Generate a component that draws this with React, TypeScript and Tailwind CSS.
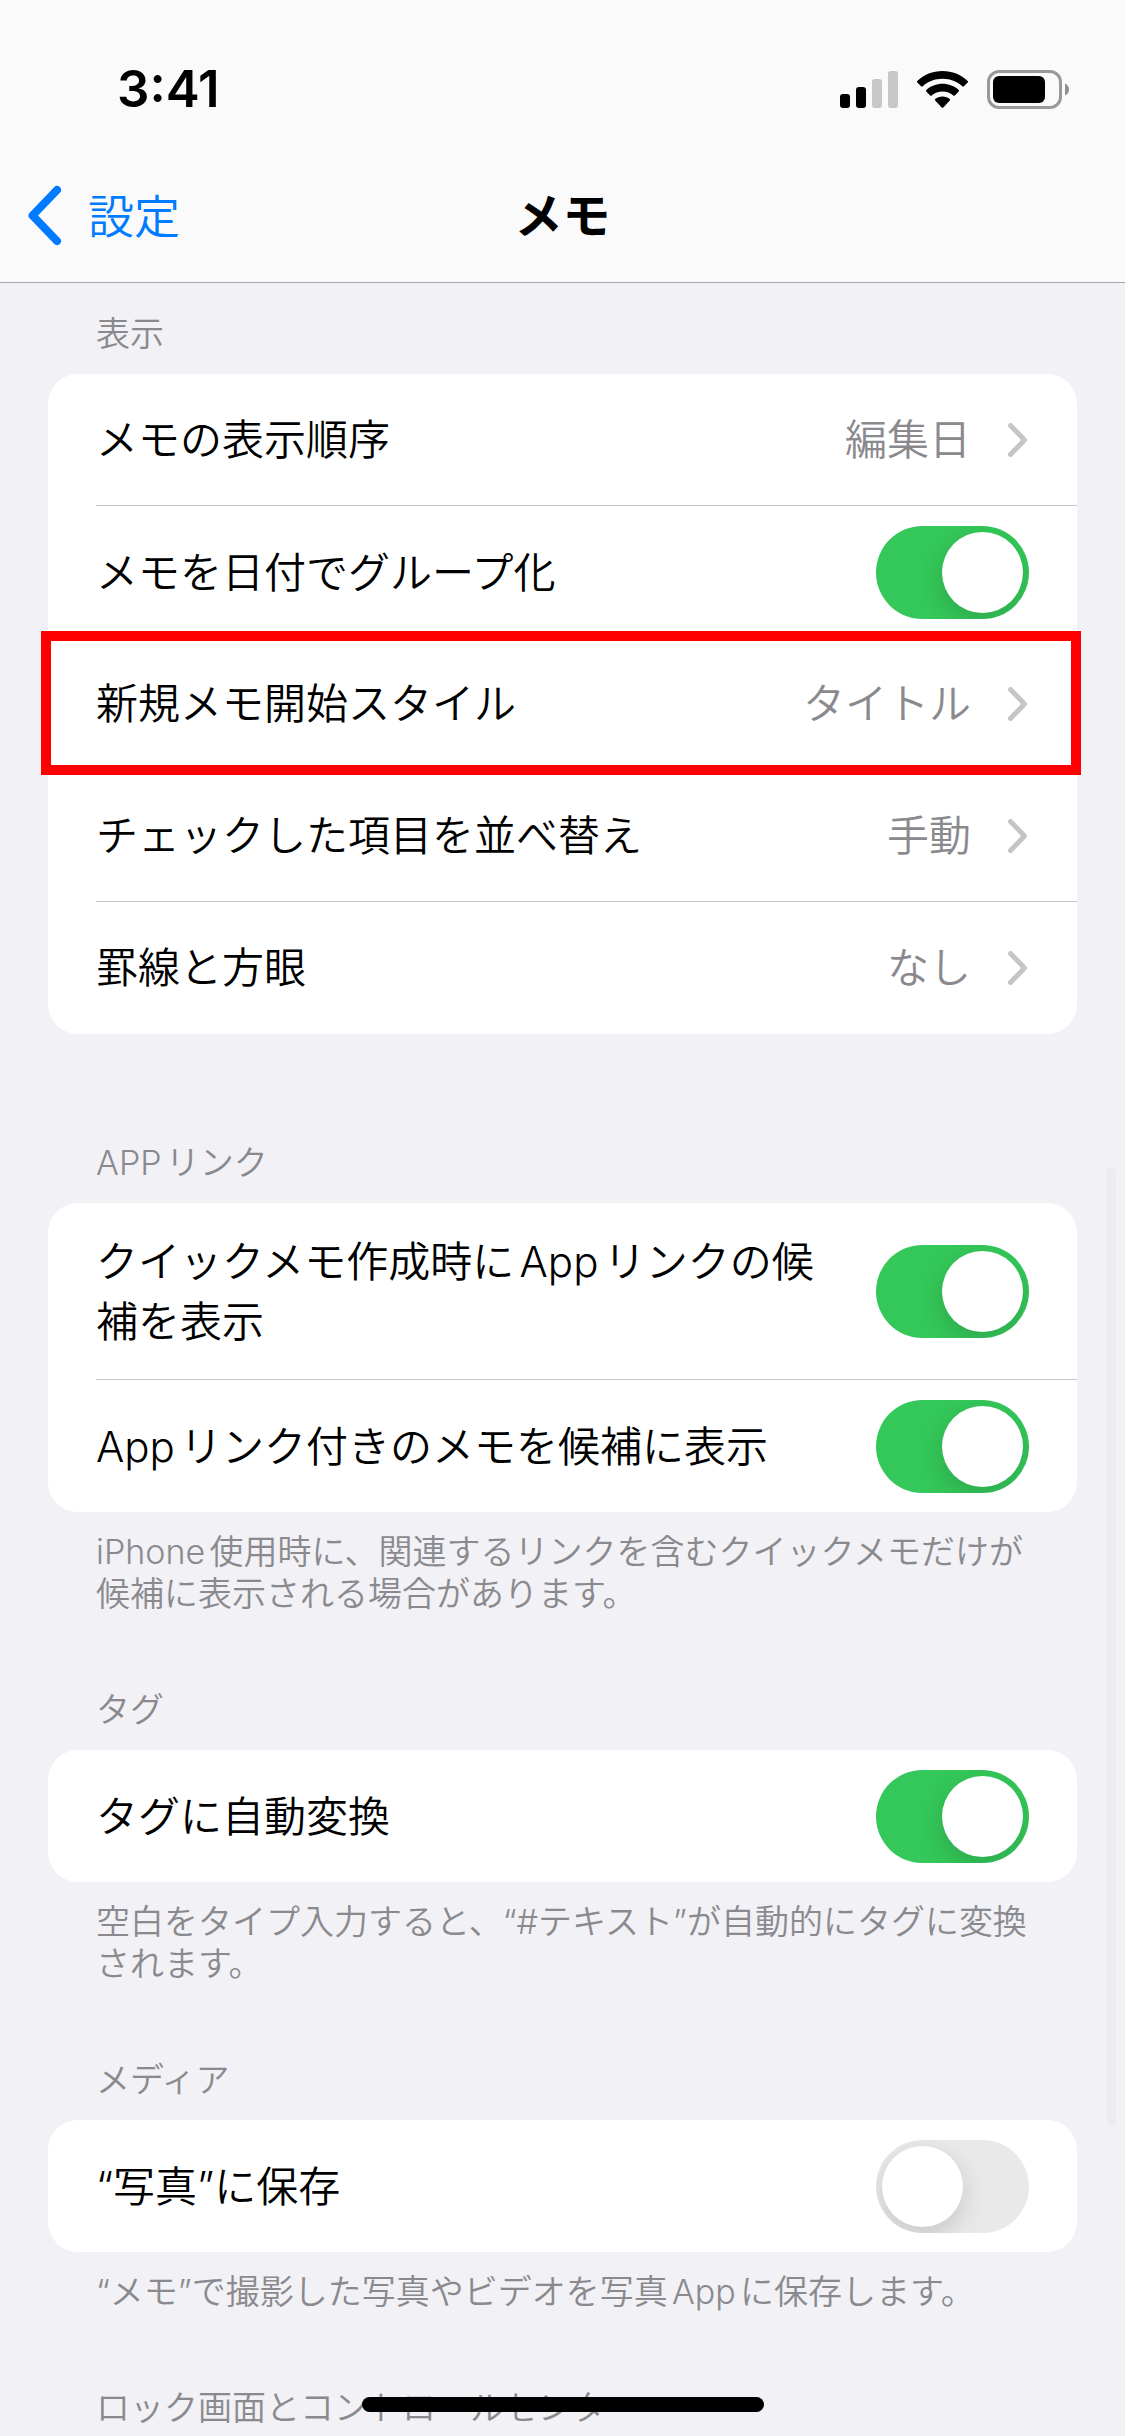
import { useState } from "react";
import type { ReactNode } from "react";

interface SectionProps {
    title: string;
    note?: string;
    className?: string;
    children?: ReactNode;
}

interface LinkRowProps {
    label: string;
    value: string;
    highlighted?: boolean;
}

interface ToggleRowProps {
    label: string;
    defaultOn?: boolean;
}

const SignalIcon = () => {
    return (
        <svg width="58" height="37" viewBox="0 0 58 37" aria-hidden="true">
            <rect x="0" y="23" width="10" height="14" rx="3" fill="#000" />
            <rect x="16" y="16" width="10" height="21" rx="3" fill="#000" />
            <rect x="32" y="8" width="10" height="29" rx="3" fill="#c7c7c7" />
            <rect x="48" y="0" width="10" height="37" rx="3" fill="#c7c7c7" />
        </svg>
    );
};

const WifiIcon = () => {
    return (
        <svg width="51" height="37" viewBox="0 0 51 37" aria-hidden="true">
            <path d="M25.5 0C35.2 0 44.1 3.7 50.7 9.9C51.2 10.4 51.2 11 50.7 11.5L46.9 15.3C46.4 15.8 45.8 15.8 45.3 15.3C40 10.4 33.1 7.7 25.5 7.7C17.9 7.7 11 10.4 5.7 15.3C5.2 15.8 4.6 15.8 4.1 15.3L.3 11.5C-.2 11-.2 10.4.3 9.9C6.9 3.7 15.8 0 25.5 0Z" />
            <path d="M25.5 12.8C31.7 12.8 37.4 15.1 41.7 19C42.2 19.5 42.2 20.1 41.7 20.6L37.9 24.4C37.4 24.9 36.8 24.8 36.3 24.4C33.4 21.9 29.6 20.4 25.5 20.4C21.4 20.4 17.6 21.9 14.7 24.4C14.2 24.8 13.6 24.9 13.1 24.4L9.3 20.6C8.8 20.1 8.8 19.5 9.3 19C13.6 15.1 19.3 12.8 25.5 12.8Z" />
            <path d="M25.5 25.5C28.4 25.5 30.8 26.4 32.8 28C33.3 28.5 33.3 29.1 32.8 29.6L26.3 36.4C25.8 36.9 25.2 36.9 24.7 36.4L18.2 29.6C17.7 29.1 17.7 28.5 18.2 28C20.2 26.4 22.6 25.5 25.5 25.5Z" />
        </svg>
    );
};

const BatteryIcon = () => {
    return (
        <svg width="82" height="39" viewBox="0 0 82 39" aria-hidden="true">
            <rect x="1.5" y="1.5" width="72" height="36" rx="10.5" fill="none" stroke="#999" strokeWidth="3" />
            <rect x="6" y="6" width="52" height="27" rx="6" fill="#000" />
            <path d="M78 13.5C80.4 14.5 82 16.8 82 19.5C82 22.2 80.4 24.5 78 25.5Z" fill="#8e8e8e" />
        </svg>
    );
};

const BackIcon = () => {
    return (
        <svg width="34" height="62" viewBox="0 0 34 62" fill="none" aria-hidden="true">
            <path d="M29 5L4.5 30.5L29 56" stroke="#007aff" strokeWidth="8" strokeLinecap="round" strokeLinejoin="round" />
        </svg>
    );
};

const ChevronIcon = () => {
    return (
        <svg width="22" height="36" viewBox="0 0 22 36" fill="none" className="shrink-0" aria-hidden="true">
            <path d="M3.5 3.5L17.5 18L3.5 32.5" stroke="#c5c5c7" strokeWidth="5" strokeLinecap="round" strokeLinejoin="round" />
        </svg>
    );
};

const StatusBar = () => {
    return (
        <div className="flex items-center justify-between pt-[59px] pr-14 pl-[117px]">
            <span className="text-[51px] leading-[60px] font-semibold">3:41</span>
            <div className="flex items-center gap-[19px]">
                <SignalIcon />
                <WifiIcon />
                <BatteryIcon />
            </div>
        </div>
    );
};

const NavBar = () => {
    return (
        <nav className="grid grid-cols-3 items-center pt-[67px] pb-[36px] pl-7 leading-[60px]">
            <button type="button" className="flex h-[60px] items-center gap-[26px] justify-self-start text-[46px] font-[350] text-[#007aff]">
                <BackIcon />
                設定
            </button>
            <h1 className="-ml-7 text-center text-[48px] font-bold">メモ</h1>
        </nav>
    );
};

const rowLine = "border-b border-[#c6c6c8] group-last:border-b-0";

const LinkRow = ({ label, value, highlighted }: LinkRowProps) => {
    return (
        <li className="group relative pl-12">
            <button type="button" className={`flex min-h-[132px] w-full items-center pr-12 text-left ${rowLine}`}>
                <span className="grow">{label}</span>
                <span className="mr-9 text-[#8a8a8e]">{value}</span>
                <ChevronIcon />
            </button>
            {highlighted && (
                <div className="pointer-events-none absolute -top-[7px] -right-1 -bottom-[5px] -left-[7px] z-10 border-10 border-[#ff0000]" />
            )}
        </li>
    );
};

const ToggleRow = ({ label, defaultOn = false }: ToggleRowProps) => {
    const [on, setOn] = useState(defaultOn);

    return (
        <li className="group pl-12">
            <label className={`flex min-h-[132px] items-center justify-between gap-12 pt-[19px] pb-[18px] pr-12 ${rowLine}`}>
                <span className="pt-[10px] pb-[9px]">{label}</span>
                <input
                    type="checkbox"
                    role="switch"
                    checked={on}
                    onChange={(e) => setOn(e.target.checked)}
                    className="flex h-[93px] w-[153px] shrink-0 appearance-none items-center overflow-hidden rounded-full bg-[#e9e9ea] px-[6px] before:size-[81px] before:rounded-full before:bg-white before:shadow-[0_9px_24px_rgba(0,0,0,0.15)] checked:justify-end checked:bg-[#34c759]"
                />
            </label>
        </li>
    );
};

const Section = ({ title, note, className = "pt-[74px]", children }: SectionProps) => {
    return (
        <section className={className}>
            <h2 className="px-12 text-[34px] leading-[42px] text-[#8a8a8e]">{title}</h2>
            {children && (
                <ul className="mt-[19px] rounded-[30px] bg-white text-[42px] leading-[60px]">{children}</ul>
            )}
            {note && (
                <p className="mt-[19px] pr-10 pl-12 text-[34px] leading-[42px] text-[#8a8a8e]">{note}</p>
            )}
        </section>
    );
};

export default function App() {
    return (
        <div
            lang="ja"
            className="relative h-screen overflow-hidden bg-[#f1f1f6] font-['Inter','Noto_Sans_CJK_JP',sans-serif] text-black [text-autospace:normal]"
        >
            <header className="border-b border-[#a9a9ac] bg-[#fafafb]">
                <StatusBar />
                <NavBar />
            </header>

            <main className="px-12 font-[350]">
                <Section title="表示" className="pt-[30px]">
                    <LinkRow label="メモの表示順序" value="編集日" />
                    <ToggleRow label="メモを日付でグループ化" defaultOn />
                    <LinkRow label="新規メモ開始スタイル" value="タイトル" highlighted />
                    <LinkRow label="チェックした項目を並べ替え" value="手動" />
                    <LinkRow label="罫線と方眼" value="なし" />
                </Section>

                <Section
                    title="APPリンク"
                    note="iPhone使用時に、関連するリンクを含むクイックメモだけが候補に表示される場合があります。"
                    className="pt-[108px]"
                >
                    <ToggleRow label="クイックメモ作成時にAppリンクの候補を表示" defaultOn />
                    <ToggleRow label="Appリンク付きのメモを候補に表示" defaultOn />
                </Section>

                <Section title="タグ" note="空白をタイプ入力すると、“#テキスト”が自動的にタグに変換されます。">
                    <ToggleRow label="タグに自動変換" defaultOn />
                </Section>

                <Section title="メディア" note="“メモ”で撮影した写真やビデオを写真Appに保存します。">
                    <ToggleRow label="“写真”に保存" />
                </Section>

                <Section title="ロック画面とコントロールセンター" />
            </main>

            {/* スクロールバー */}
            <div className="absolute top-[1168px] right-[9px] h-[958px] w-[9px] rounded-full bg-[#ebebf0]" />
            {/* ホームインジケータ */}
            <div className="absolute bottom-6 left-1/2 h-[15px] w-[402px] -translate-x-1/2 rounded-full bg-black" />
        </div>
    );
}
